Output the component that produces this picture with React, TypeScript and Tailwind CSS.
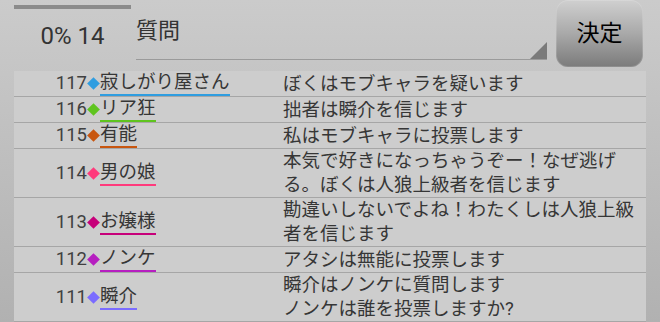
import React from "react";

type Row = { no: number; color: string; name: string; msg: React.ReactNode };

const rows: Row[] = [
  { no: 117, color: "#2f9de0", name: "寂しがり屋さん", msg: "ぼくはモブキャラを疑います" },
  { no: 116, color: "#5fc41f", name: "リア狂", msg: "拙者は瞬介を信じます" },
  { no: 115, color: "#c8560f", name: "有能", msg: "私はモブキャラに投票します" },
  {
    no: 114,
    color: "#ff3a7c",
    name: "男の娘",
    msg: (
      <>
        本気で好きになっちゃうぞー！なぜ逃げ
        <br />
        る。ぼくは人狼上級者を信じます
      </>
    ),
  },
  {
    no: 113,
    color: "#c7007a",
    name: "お嬢様",
    msg: (
      <>
        勘違いしないでよね！わたくしは人狼上級
        <br />
        者を信じます
      </>
    ),
  },
  { no: 112, color: "#b61fc0", name: "ノンケ", msg: "アタシは無能に投票します" },
  {
    no: 111,
    color: "#7b6cff",
    name: "瞬介",
    msg: (
      <>
        瞬介はノンケに質問します
        <br />
        ノンケは誰を投票しますか?
      </>
    ),
  },
];

export default function App() {
  return (
    <div
      className="w-[660px] h-[322px] overflow-hidden bg-gradient-to-b from-[#cbcbcb] to-[#b1b1b1] text-[#363636]"
      style={{ fontFamily: "Roboto, 'Noto Sans CJK JP', sans-serif" }}
    >
      {/* Header */}
      <div className="flex h-[71px]">
        <div className="ml-[14px] w-[117px] flex flex-col">
          <div className="mt-[5px] h-[4px] bg-[#8b8b8b]" />
          <div className="mt-[13px] text-center text-[24px] leading-[28px] text-[#333]">0% 14</div>
        </div>
        <div className="ml-[5px] w-[411px] h-[60px] relative border-b border-[#9a9a9a]">
          <div className="mt-[17px] text-[22px] leading-[28px] text-[#333]">質問</div>
          <svg className="absolute right-0 bottom-0" width="17" height="17" viewBox="0 0 17 17">
            <polygon points="0,17 17,17 17,0" fill="#7a7a7a" />
          </svg>
        </div>
        <div className="ml-[9px] w-[87px] h-[67px] rounded-[12px] bg-gradient-to-b from-[#d0d0d0] via-[#a9a9a9] to-[#7b7b7b] flex items-center justify-center shadow-[inset_0_0_0_1px_rgba(255,255,255,0.15)]">
          <span className="text-[23px] leading-none text-black -mt-[1px]">決定</span>
        </div>
      </div>

      {/* List */}
      <div className="mx-[14px] bg-[#cdcdcd]">
        {rows.map((r) => (
          <div key={r.no} className="flex items-center border-b border-[#a6a6a6] text-[18.5px]">
            <div className="w-[269px] flex items-center">
              <div className="w-[73px] text-right leading-[25px] text-[#404040]">{r.no}</div>
              <div className="w-[13px] flex justify-center">
                <div className="w-[9px] h-[9px] rotate-45" style={{ backgroundColor: r.color }} />
              </div>
              <div className="h-[25px] leading-[23px] border-b-2" style={{ borderColor: r.color }}>
                {r.name}
              </div>
            </div>
            <div className="flex-1 leading-[24px] min-h-[25px] flex items-center">
              <div>{r.msg}</div>
            </div>
          </div>
        ))}
      </div>
    </div>
  );
}
